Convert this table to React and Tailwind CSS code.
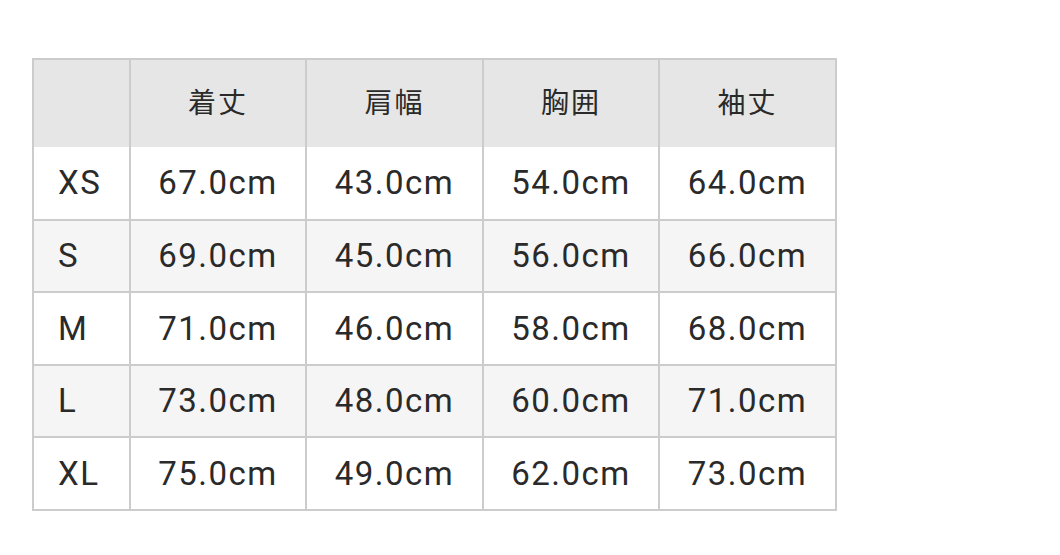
import React from 'react';

const headers = ['着丈', '肩幅', '胸囲', '袖丈'];
const rows = [
    ['XS', '67.0cm', '43.0cm', '54.0cm', '64.0cm'],
    ['S', '69.0cm', '45.0cm', '56.0cm', '66.0cm'],
    ['M', '71.0cm', '46.0cm', '58.0cm', '68.0cm'],
    ['L', '73.0cm', '48.0cm', '60.0cm', '71.0cm'],
    ['XL', '75.0cm', '49.0cm', '62.0cm', '73.0cm'],
];

const App = () => {
    return (
        <div className="min-h-screen bg-white pt-[58px] pl-[32px]" style={{ fontFamily: 'Roboto, "Noto Sans CJK JP", sans-serif' }}>
            <table className="border-collapse border-2 border-[#cccccc] text-[#2a2a2a] table-fixed w-[803px]">
                <colgroup>
                    <col className="w-[97px]" />
                    <col className="w-[176px]" />
                    <col className="w-[177px]" />
                    <col className="w-[176px]" />
                    <col className="w-[177px]" />
                </colgroup>
                <thead>
                    <tr className="bg-[#e6e6e6] h-[88px]">
                        <th className="border-x-2 border-[#cccccc]"></th>
                        {headers.map((h) => (
                            <th key={h} className="border-x-2 border-[#cccccc] font-normal text-[28px] tracking-[2px] text-center">
                                {h}
                            </th>
                        ))}
                    </tr>
                </thead>
                <tbody>
                    {rows.map((r, i) => (
                        <tr key={r[0]} className={`h-[72.6px] ${i % 2 === 1 ? 'bg-[#f5f5f5]' : 'bg-white'}`}>
                            {r.map((c, j) => (
                                <td
                                    key={j}
                                    className={`border-2 border-[#cccccc] text-[33px] tracking-[1.5px] ${i === 0 ? 'border-t-0' : ''} ${j === 0 ? 'text-left pl-[24px]' : 'text-center'}`}
                                >
                                    {c}
                                </td>
                            ))}
                        </tr>
                    ))}
                </tbody>
            </table>
        </div>
    );
};

export default App;
